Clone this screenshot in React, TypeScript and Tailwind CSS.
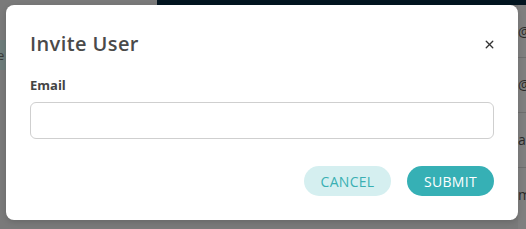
import { X } from 'lucide-react';

export default function App() {
  return (
    <div className="relative w-[526px] h-[229px] overflow-hidden bg-[#7a7a7a] font-['Open_Sans',sans-serif]">
      {/* page behind the overlay */}
      <div className="flex flex-col h-full">
        <div className="flex h-[5px]">
          <div className="w-[157px] bg-[#7a7a7a]"></div>
          <div className="flex-1 bg-[#021520]"></div>
        </div>
        <div className="flex flex-1">
          <div className="w-[6px] flex flex-col">
            <div className="h-[35px]"></div>
            <div className="h-[30px] bg-[#6e7d7b] text-[13px] leading-[30px] text-[#3a3a3a] -ml-[3px]">e</div>
          </div>
          <div className="flex-1"></div>
          <div className="w-[8px] flex flex-col bg-[#7f7f7f] text-[14px] text-[#2a2a2a] overflow-hidden whitespace-nowrap">
            <div className="h-[53px] border-b border-[#6e6e6e] pt-[16px]">@l</div>
            <div className="h-[55px] border-b border-[#6e6e6e] pt-[16px]">@c</div>
            <div className="h-[55px] border-b border-[#6e6e6e] pt-[16px]">ar</div>
            <div className="flex-1 pt-[16px]">m</div>
          </div>
        </div>
      </div>

      {/* modal */}
      <div className="absolute left-[6px] top-[5px] w-[512px] h-[215px] bg-white rounded-[8px] shadow-[0_2px_6px_rgba(0,0,0,0.15)] px-[24px] pt-[26px]">
        <div className="flex items-center justify-between">
          <h2 className="text-[20px] leading-[26px] font-semibold tracking-[0.4px] text-[#4a4a4a]">Invite User</h2>
          <button className="mr-[-2px] text-[#333]">
            <X size={13} strokeWidth={2.5} />
          </button>
        </div>
        <label className="block mt-[19px] text-[13px] leading-[18px] font-bold text-[#444]">Email</label>
        <input className="mt-[8px] block w-full h-[37px] rounded-[6px] border border-[#cfcfcf] outline-none" />
        <div className="flex justify-end gap-[16px] mt-[27px]">
          <button className="w-[87px] h-[30px] rounded-full bg-[#d5eff0] text-[#3aafb3] text-[14px] font-medium uppercase tracking-[0.3px]">Cancel</button>
          <button className="w-[87px] h-[30px] rounded-full bg-[#36b0b5] text-white text-[14px] font-medium uppercase tracking-[0.3px]">Submit</button>
        </div>
      </div>
    </div>
  );
}
